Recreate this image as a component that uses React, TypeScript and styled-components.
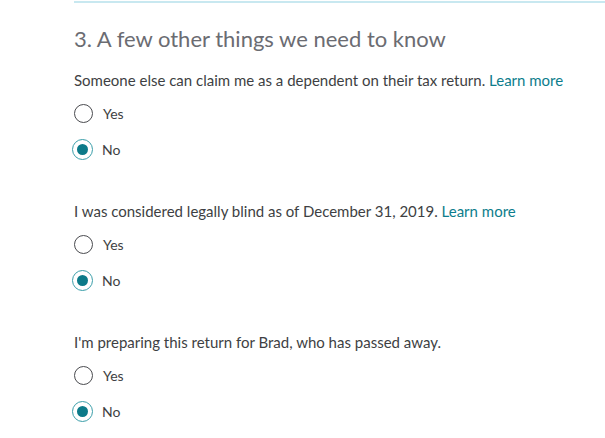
import styled, { createGlobalStyle } from 'styled-components';

const GlobalStyle = createGlobalStyle`
  body {
    margin: 0;
    background: #ffffff;
    font-family: Lato, "Open Sans", sans-serif;
    color: #393a3d;
  }
`;

const Page = styled.div`
  padding: 1px 0 0 74px;
`;

const Section = styled.section`
  border-top: 2px solid #c8e8f0;
  padding-top: 20px;
`;

const Title = styled.h2`
  margin: 0 0 15px;
  font-size: 22px;
  font-weight: 400;
  line-height: 32px;
  color: #6b6c72;
`;

const Question = styled.div`
  margin-bottom: 34px;

  &:last-child {
    margin-bottom: 0;
  }
`;

const Prompt = styled.p`
  margin: 0 0 5px;
  font-size: 15px;
  line-height: 20px;
  color: #3e3f43;
`;

const LearnMore = styled.a`
  color: #0d7d8c;
  text-decoration: none;
`;

const Option = styled.label`
  display: flex;
  align-items: center;
  gap: 10px;
  height: 36px;
  font-size: 14px;
  color: #3e3f43;
`;

const Circle = styled.span<{ checked: boolean }>`
  box-sizing: border-box;
  width: ${(p) => (p.checked ? 21 : 19)}px;
  height: ${(p) => (p.checked ? 21 : 19)}px;
  margin-left: ${(p) => (p.checked ? -2 : 0)}px;
  margin-right: ${(p) => (p.checked ? -1 : 0)}px;
  border-radius: 50%;
  border: ${(p) => (p.checked ? '1px solid #3a9ea9' : '1.5px solid #4a4b4f')};
  display: flex;
  align-items: center;
  justify-content: center;

  &::after {
    content: '';
    display: ${(p) => (p.checked ? 'block' : 'none')};
    width: 11px;
    height: 11px;
    border-radius: 50%;
    background: #0b7a89;
  }
`;

type QuestionData = {
  prompt: string;
  learnMore: boolean;
  answer: 'Yes' | 'No';
};

const questions: QuestionData[] = [
  {
    prompt: 'Someone else can claim me as a dependent on their tax return.',
    learnMore: true,
    answer: 'No',
  },
  {
    prompt: 'I was considered legally blind as of December 31, 2019.',
    learnMore: true,
    answer: 'No',
  },
  {
    prompt: "I'm preparing this return for Brad, who has passed away.",
    learnMore: false,
    answer: 'No',
  },
];

function App() {
  return (
    <Page>
      <GlobalStyle />
      <Section>
        <Title>3. A few other things we need to know</Title>
        {questions.map((q) => (
          <Question key={q.prompt} role="radiogroup">
            <Prompt>
              {q.prompt}
              {q.learnMore && (
                <>
                  {' '}
                  <LearnMore href="#">Learn more</LearnMore>
                </>
              )}
            </Prompt>
            {(['Yes', 'No'] as const).map((opt) => (
              <Option key={opt}>
                <Circle checked={q.answer === opt} />
                {opt}
              </Option>
            ))}
          </Question>
        ))}
      </Section>
    </Page>
  );
}

export default App;
